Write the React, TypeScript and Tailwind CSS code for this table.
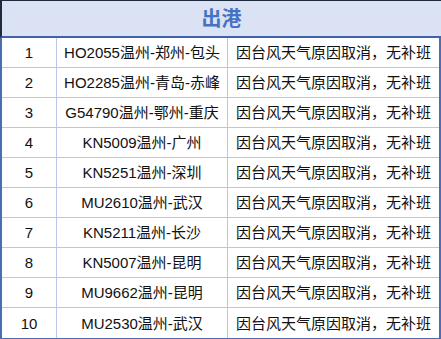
import React from "react";

const rows: [string, string][] = [
  ["1", "HO2055温州-郑州-包头"],
  ["2", "HO2285温州-青岛-赤峰"],
  ["3", "G54790温州-鄂州-重庆"],
  ["4", "KN5009温州-广州"],
  ["5", "KN5251温州-深圳"],
  ["6", "MU2610温州-武汉"],
  ["7", "KN5211温州-长沙"],
  ["8", "KN5007温州-昆明"],
  ["9", "MU9662温州-昆明"],
  ["10", "MU2530温州-武汉"],
];

export default function App() {
  return (
    <div
      className="w-[441px] h-[339px] bg-white overflow-hidden text-[#111]"
      style={{ fontFamily: '"Liberation Sans", "Noto Sans CJK SC", sans-serif' }}
    >
      <div className="h-[38px] bg-[#dae2f3] border-t border-l-2 border-[#1e2a40] border-b-2 border-b-[#3f62a8] flex items-center justify-center">
        <span className="text-[20px] font-bold text-[#4472c4] leading-none">出港</span>
      </div>
      <div className="border-l-2 border-r-2 border-b-2 border-[#4a6db3]">
        {rows.map(([n, f], i) => (
          <div
            key={n}
            className={`flex h-[30px] items-center text-[15px] leading-none ${i < rows.length - 1 ? "border-b border-[#b8c7e6]" : ""}`}
          >
            <div className="w-[55px] h-full flex items-center justify-center border-r border-[#b8c7e6]">{n}</div>
            <div className="w-[171px] h-full flex items-center justify-center border-r border-[#b8c7e6] whitespace-nowrap">{f}</div>
            <div className="flex-1 h-full flex items-center justify-center whitespace-nowrap">因台风天气原因取消，无补班</div>
          </div>
        ))}
      </div>
    </div>
  );
}
